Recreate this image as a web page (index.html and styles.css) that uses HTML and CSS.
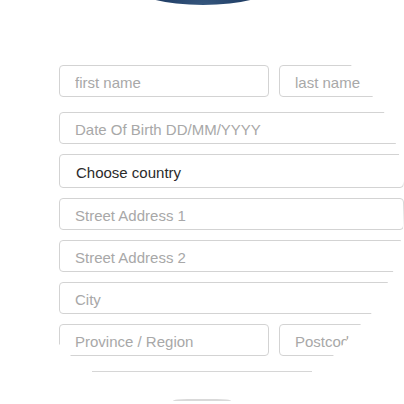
FILE: index.html
```html
<!DOCTYPE html>
<html lang="en">
<head>
  <meta charset="UTF-8">
  <meta name="viewport" content="width=device-width, initial-scale=1.0">
  <title>Sign up</title>
  <link rel="stylesheet" href="styles.css">
</head>
<body>

  <div class="avatar"></div>

  <form class="signup">
    <div class="row">
      <input class="field half" type="text" placeholder="first name">
      <input class="field short cut-last" type="text" placeholder="last name">
    </div>
    <input class="field wide cut-dob" type="text" placeholder="Date Of Birth DD/MM/YYYY">
    <div class="field wide select cut-country">Choose country</div>
    <input class="field wide cut-street1" type="text" placeholder="Street Address 1">
    <input class="field wide cut-street2" type="text" placeholder="Street Address 2">
    <input class="field wide cut-city" type="text" placeholder="City">
    <div class="row">
      <input class="field half cut-province" type="text" placeholder="Province / Region">
      <input class="field short cut-postcode" type="text" placeholder="Postcode">
    </div>
    <div class="divider"></div>
    <div class="submit-edge"></div>
  </form>

</body>
</html>
```

FILE: styles.css
```css
/* Base */
body {
  margin: 0;
  padding: 0;
  font-family: "Liberation Sans", Arial, sans-serif;
  background: #fff;
  overflow: hidden;
  height: 404px;
}

/* Avatar peeking from the top */
.avatar {
  width: 140px;
  height: 38px;
  margin: -33px 0 0 133px;
  border-radius: 50%;
  background: radial-gradient(ellipse at 50% 100%, #36577e 0%, #24436b 35%, #1b3557 70%);
}

/* Form */
.signup {
  display: flex;
  flex-direction: column;
  gap: 10px;
  padding: 60px 0 0 59px;
}

.row {
  display: flex;
  gap: 10px;
  margin-bottom: 5px;
}

.field {
  box-sizing: border-box;
  height: 32px;
  margin: 0;
  padding: 2px 15px 0;
  border: 1px solid #d3d3d3;
  border-radius: 4px;
  background: #fff;
  font-family: inherit;
  font-size: 15px;
  color: #333;
  outline: none;
}

.field::placeholder {
  color: #a8a8a8;
}

.half {
  width: 210px;
}

.short {
  width: 100px;
}

.wide {
  width: 345px;
}

.select {
  height: 34px;
  display: flex;
  align-items: center;
  padding-left: 16px;
  color: #2b2b2b;
}

/* Trimmed edges */
.cut-last { clip-path: polygon(0 0, 72px 0, 94px 100%, 0 100%); }
.cut-dob { clip-path: polygon(0 0, 325px 0, 337px 100%, 0 100%); }
.cut-country { clip-path: polygon(0 0, 340px 0, 100% 100%, 0 100%); }
.cut-street1 { clip-path: polygon(0 0, 100% 0, 344px 100%, 0 100%); }
.cut-street2 { clip-path: polygon(0 0, 342px 0, 334px 100%, 0 100%); }
.cut-city { clip-path: polygon(0 0, 329px 0, 312px 100%, 0 100%); }
.cut-province { clip-path: polygon(0 0, 100% 0, 100% 100%, 12px 100%, 0 20px); }
.cut-postcode { clip-path: polygon(0 0, 82px 0, 54px 100%, 0 100%); }

.divider {
  width: 220px;
  height: 1px;
  margin: 0 0 0 33px;
  background: #d6d6d6;
}

.submit-edge {
  width: 58px;
  height: 4px;
  margin: 17px 0 0 114px;
  box-sizing: border-box;
  border-top: 2px solid #d9d9d9;
  border-radius: 50% / 4px;
}
```
